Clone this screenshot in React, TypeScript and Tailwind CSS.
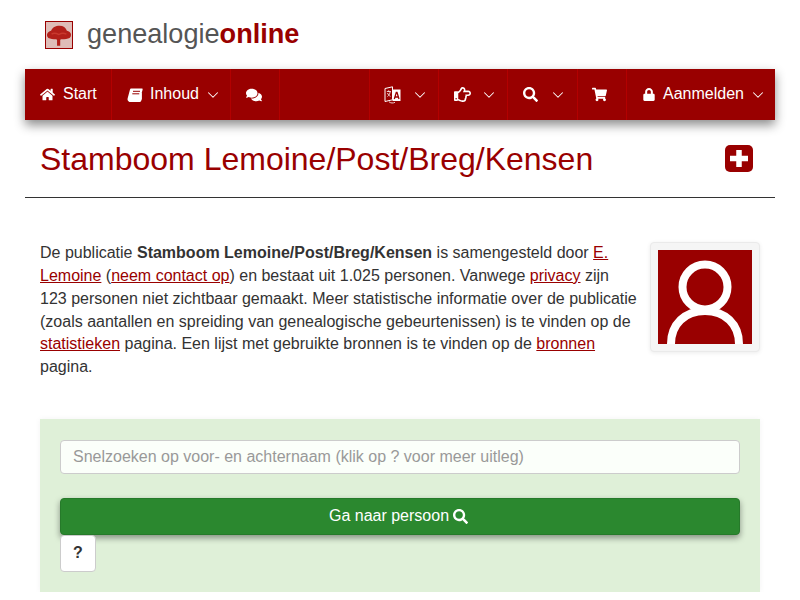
import { ChevronDown } from "lucide-react";
import { FaComments, FaHome, FaLock, FaRegHandPointRight, FaSearch, FaShoppingCart } from "react-icons/fa";

function LanguageIcon() {
    return (
        <svg width="17" height="18" viewBox="0 0 17 18" fill="none">
            <path d="M1 2.500 8.500 .8v13L1 15.500z" stroke="#fff" strokeWidth="1" />
            <path d="M8.500 3.500h8v11.500h-8z" fill="#fff" />
            <path d="M2.800 5.500h4M4.700 4.300v1.200M3.500 10.500c1.500-1 2.500-2.800 2.700-5M3.500 7c.5 1.500 1.700 2.800 3 3.300" stroke="#fff" strokeWidth=".8" />
            <path d="M10.300 13 12.300 6.500h.7l2 6.500M11 11h3.300" stroke="#990000" strokeWidth="1.300" />
            <path d="M5 15.800c2 1.500 4 1.500 6 .5" stroke="#fff" strokeWidth=".8" />
        </svg>
    );
}

// FontAwesome 4 style slanted book
function BookIcon() {
    return (
        <svg width="16" height="14" viewBox="0 0 16 14">
            <path d="M4 .5h10.800c.7 0 1 .5.800 1.200l-2.600 9.300c-.3 1.200-1 1.500-2 1.500H2.800c-.7 0-1-.3-.9-.7.1-.4.500-.6 1-.6h8.800c.6 0 1-.3 1.200-.9l2-7.300v8l-.9 2.200c-.2.500-.7.800-1.300.8H2.400C1 13 .2 12 .6 10.500L3 1.500C3.200.8 3.500.5 4 .5z" fill="#fff" />
            <path d="M6 3.300h7M5.300 5.800h7" stroke="#990000" strokeWidth="1" />
        </svg>
    );
}

function NavCell({ children, width, chevron, border = true }: { children?: React.ReactNode; width: string; chevron?: boolean; border?: boolean }) {
    return (
        <div className={`${width} flex h-full items-center justify-between ${border ? "border-r border-[#b30000]" : ""}`}>
            {children}
            {chevron && <ChevronDown className="w-[18px] h-[18px] mt-[1px] text-white" strokeWidth={1.4} />}
        </div>
    );
}

export default function App() {
    return (
        <div className="font-['Liberation_Sans',Arial,sans-serif] text-[16px] leading-[22.85px] text-[#333] bg-white">
            <div className="px-[25px]">
                {/* logo */}
                <div className="h-[69px] pl-[20px] flex items-center gap-[14px]">
                    <svg width="28" height="28" viewBox="0 0 28 28" className="border border-[#990000]">
                        <rect width="28" height="28" fill="#dfbdb8" />
                        <path d="M1.500 16C0 12.500 3 10 5.500 9.500 6.500 6 10.500 4 14.500 4S21.500 6 22.500 9.500c3 .5 5.500 3 4 6.500-1 2-4 2.500-7 2.500h-3.500l-.7 1v6h-3.400v-6l-.8-1H8.500c-3 0-6-.5-7-2.500z" fill="#b3201a" />
                        <path d="M6 13c3-2 5-1 8 .5 3-2 5-2 8-.5" stroke="#c9392e" strokeWidth="1.500" fill="none" />
                    </svg>
                    <div className="text-[27.1px] leading-none text-[#555] -mt-[1px]">
                        genealogie<span className="font-bold text-[#990000]">online</span>
                    </div>
                </div>

                {/* nav */}
                <nav className="h-[51px] bg-[#990000] text-white flex shadow-[0_5px_10px_rgba(0,0,0,0.45)]">
                    <NavCell width="w-[87px]">
                        <div className="flex items-center gap-[8px] pl-[15px]"><FaHome className="w-[15px] h-[15px]" /> Start</div>
                    </NavCell>
                    <NavCell width="w-[119px] pr-[8px]" chevron>
                        <div className="flex items-center gap-[7px] pl-[15px]"><BookIcon /> Inhoud</div>
                    </NavCell>
                    <NavCell width="w-[49px]">
                        <FaComments className="w-[16px] h-[16px] ml-[15px]" />
                    </NavCell>
                    <NavCell width="w-[90px]" />
                    <NavCell width="w-[69px] pr-[9px]" chevron>
                        <div className="pl-[14px]"><LanguageIcon /></div>
                    </NavCell>
                    <NavCell width="w-[69px] pr-[9px]" chevron>
                        <FaRegHandPointRight className="w-[17px] h-[17px] ml-[15px]" />
                    </NavCell>
                    <NavCell width="w-[70px] pr-[10px]" chevron>
                        <FaSearch className="w-[15px] h-[15px] ml-[15px]" />
                    </NavCell>
                    <NavCell width="w-[49px]">
                        <FaShoppingCart className="w-[15px] h-[15px] ml-[14px]" />
                    </NavCell>
                    <NavCell width="flex-1 pr-[8px]" chevron border={false}>
                        <div className="flex items-center gap-[8px] pl-[16px]"><FaLock className="w-[12px] h-[13px]" /> Aanmelden</div>
                    </NavCell>
                </nav>

                {/* title */}
                <div className="h-[78px] border-b border-[#333] pl-[15px] pr-[22px] flex items-center justify-between">
                    <h1 className="text-[32px] leading-none text-[#990000]">Stamboom Lemoine/Post/Breg/Kensen</h1>
                    <svg width="28" height="27" viewBox="0 0 28 27">
                        <rect width="28" height="27" rx="5" fill="#990000" />
                        <path d="M14 5v17M5 13.500h18" stroke="#fff" strokeWidth="5.500" />
                    </svg>
                </div>
            </div>

            <div className="px-[40px] pt-[44px]">
                <div className="float-right ml-[10px] w-[110px] h-[110px] p-[7px] bg-[#f5f5f5] border border-[#eaeaea] rounded-[4px] shadow-[0_1px_4px_rgba(0,0,0,0.08)]">
                    <svg viewBox="0 0 94 94" className="w-[94px] h-[94px] bg-[#990000]">
                        <circle cx="47" cy="37" r="22.500" fill="none" stroke="#fff" strokeWidth="8" />
                        <path d="M13 94c0-20 14-33 34-33s34 13 34 33" fill="none" stroke="#fff" strokeWidth="8" />
                    </svg>
                </div>
                <p>
                    De publicatie <b>Stamboom Lemoine/Post/Breg/Kensen</b> is samengesteld door{" "}
                    <a className="text-[#990000] underline">E. Lemoine</a> (<a className="text-[#990000] underline">neem contact op</a>) en bestaat uit 1.025 personen. Vanwege{" "}
                    <a className="text-[#990000] underline">privacy</a> zijn 123 personen niet zichtbaar gemaakt. Meer statistische informatie over de publicatie (zoals aantallen en spreiding van genealogische gebeurtenissen) is te vinden op de{" "}
                    <a className="text-[#990000] underline">statistieken</a> pagina. Een lijst met gebruikte bronnen is te vinden op de{" "}
                    <a className="text-[#990000] underline">bronnen</a> pagina.
                </p>

                <div className="clear-both mt-[40px] h-[173px] bg-[#dff0d8] px-[20px] pt-[21px] shadow-[0_0_6px_rgba(0,0,0,0.05)]">
                    <input
                        placeholder="Snelzoeken op voor- en achternaam (klik op ? voor meer uitleg)"
                        className="block w-full h-[34px] px-[12px] bg-[#fbfffa] border border-[#ccc] rounded-[4px] text-[16px] placeholder:text-[#999] outline-none"
                    />
                    <button className="mt-[24px] flex w-full h-[37px] pr-[3px] items-center justify-center gap-[4px] rounded-[4px] bg-[#2b882f] border border-[#267a2a] text-white shadow-[0_3px_6px_rgba(0,0,0,0.4)]">
                        Ga naar persoon <FaSearch className="w-[15px] h-[15px]" />
                    </button>
                    <button className="block w-[36px] h-[37px] rounded-[4px] bg-white border border-[#ccc] font-bold text-[#333]">?</button>
                </div>
            </div>
        </div>
    );
}
